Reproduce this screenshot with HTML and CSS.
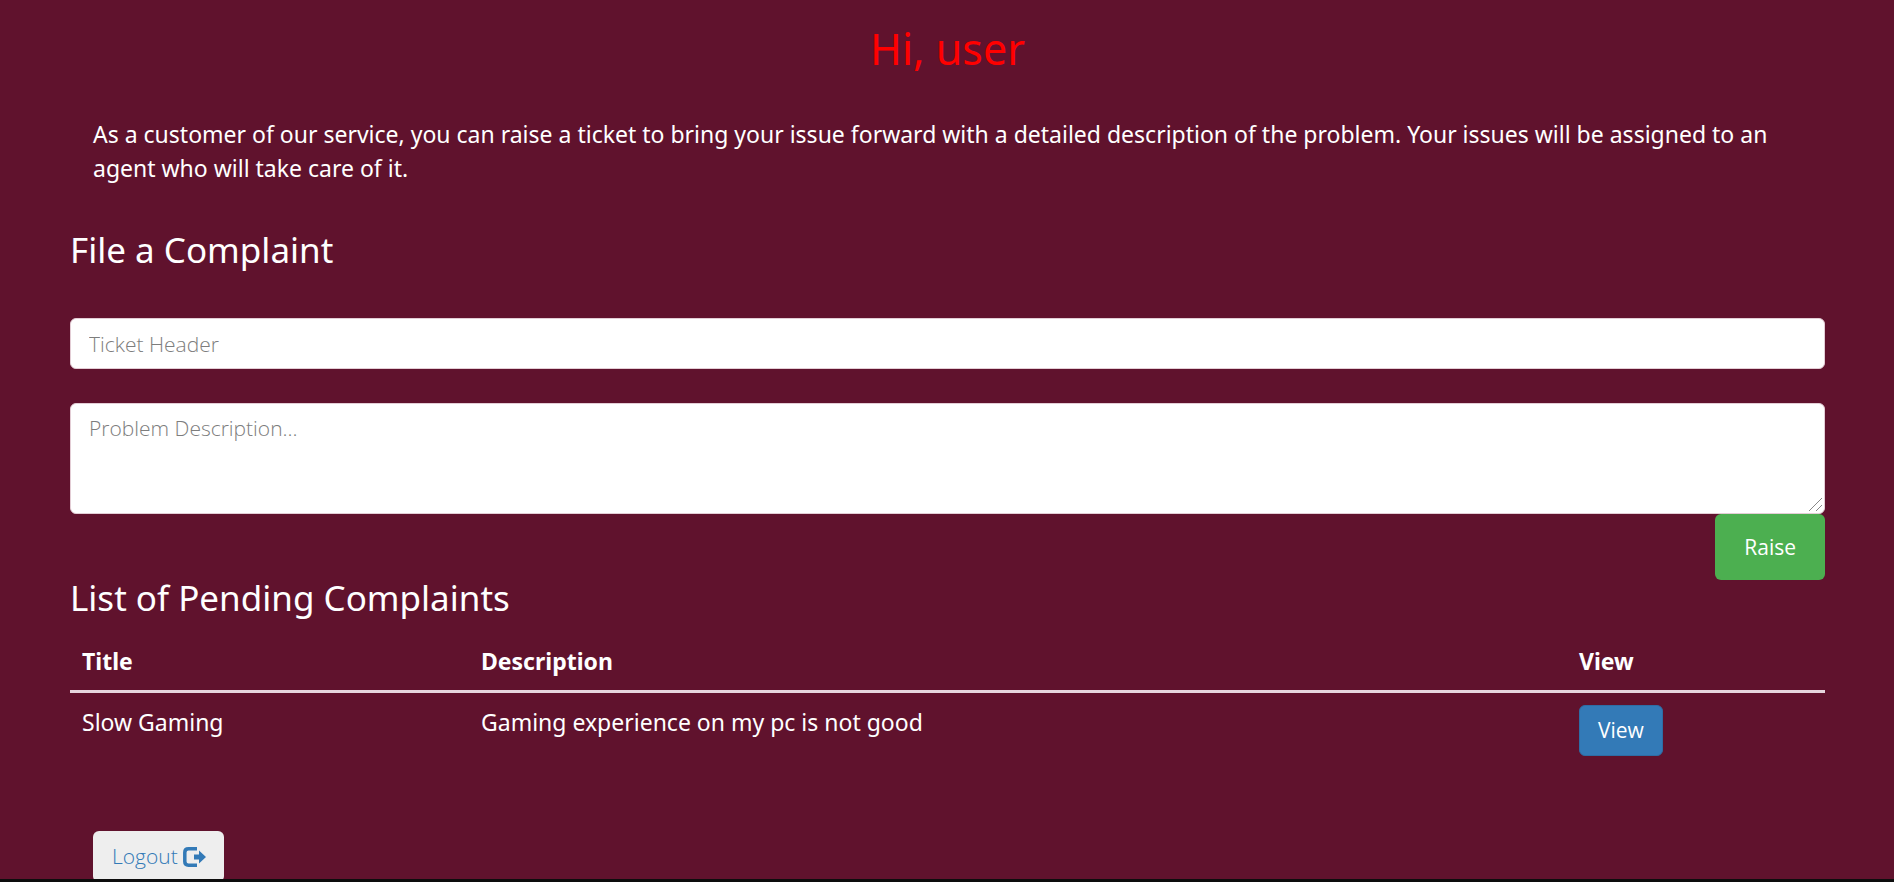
FILE: index.html
```html
<!DOCTYPE html>
<html lang="en">
<head>
<meta charset="utf-8">
<meta name="viewport" content="width=device-width, initial-scale=1">
<title>Customer complaints</title>
<link rel="stylesheet" href="styles.css">
</head>
<body>
<main class="page">
  <h1 class="greeting">Hi, user</h1>
  <p class="intro">As a customer of our service, you can raise a ticket to bring your issue forward with a detailed description of the problem. Your issues will be assigned to an agent who will take care of it.</p>

  <h2 class="section-title">File a Complaint</h2>
  <form class="complaint-form">
    <input class="field" type="text" name="header" aria-label="Ticket Header" placeholder="Ticket Header">
    <textarea class="field field-area" name="description" aria-label="Problem Description" placeholder="Problem Description..."></textarea>
    <button class="btn btn-raise" type="submit">Raise</button>
  </form>

  <h2 class="section-title list-title">List of Pending Complaints</h2>
  <table class="complaints">
    <thead>
      <tr><th class="col-title">Title</th><th class="col-description">Description</th><th>View</th></tr>
    </thead>
    <tbody>
      <tr><td>Slow Gaming</td><td>Gaming experience on my pc is not good</td><td><button class="btn btn-view" type="button">View</button></td></tr>
    </tbody>
  </table>

  <a class="btn btn-logout" href="#">Logout
    <svg class="logout-icon" viewBox="0 0 23 20" aria-hidden="true">
      <path d="M14 1.8H5.500Q1.800 1.800 1.800 5.500V14.500Q1.800 18.200 5.500 18.200H14" fill="none" stroke="currentColor" stroke-width="3.500"/>
      <path d="M11 7.500H16V3.500L23 10L16 16.500V12.500H11Z" fill="currentColor"/>
    </svg>
  </a>
</main>
</body>
</html>
```
FILE: styles.css
```css
* {
  box-sizing: border-box;
}

body {
  display: flex;
  flex-direction: column;
  height: 100vh;
  margin: 0;
  border-bottom: 3px solid #0d0d0d;
  background: #60122d;
  color: #fff;
  font-family: "Noto Sans", "Open Sans", sans-serif;
  font-size: 23px;
  line-height: 34px;
}

.page {
  flex: 1;
  min-height: 0;
  overflow: hidden;
  padding: 24px 69px 0 70px;
}

.greeting {
  margin: 0;
  color: #f00;
  font-size: 43px;
  font-weight: 400;
  line-height: 50px;
  text-align: center;
}

.intro {
  margin: 43px 0 47px;
  padding: 0 23px;
}

.section-title {
  margin: 0;
  font-size: 35px;
  font-weight: 400;
  line-height: 36px;
}

.complaint-form {
  display: flex;
  flex-direction: column;
  margin-top: 50px;
}

.field {
  width: 100%;
  height: 51px;
  margin: 0 0 34px;
  padding: 8px 18px;
  border: 1px solid #e3cdd5;
  border-radius: 6px;
  background: #fff;
  color: #555;
  font-family: "Open Sans", sans-serif;
  font-size: 21px;
  font-weight: 300;
  line-height: 33px;
}

.field::placeholder {
  color: #7d7d7d;
  opacity: 1;
}

.field-area {
  height: 111px;
  margin: 0;
  resize: vertical;
}

.field-area::-webkit-resizer {
  background: linear-gradient(135deg, transparent 49%, #888 49%, #888 53%, transparent 53%, transparent 74%, #888 74%, #888 78%, transparent 78%) 0 0 / 13px 13px no-repeat;
}

.btn {
  border: 1px solid transparent;
  border-radius: 6px;
  font-family: "Open Sans", sans-serif;
  font-size: 21px;
  font-weight: 300;
  line-height: 33px;
  text-decoration: none;
  cursor: pointer;
}

.btn-raise {
  align-self: flex-end;
  padding: 16px 28px;
  background: #4caf50;
  color: #fff;
  font-weight: 400;
  line-height: 32px;
}

.list-title {
  margin-bottom: 16px;
}

.complaints {
  width: 100%;
  border-collapse: collapse;
}

.complaints th,
.complaints td {
  padding: 12px;
  text-align: left;
  vertical-align: top;
}

.complaints th {
  border-bottom: 3px solid #e6d5dd;
}

.col-title {
  width: 399px;
}

.col-description {
  width: 1098px;
}

.btn-view {
  display: block;
  padding: 8px 18px;
  border-color: #2e6da4;
  background: #337ab7;
  color: #fff;
  font-weight: 400;
}

.btn-logout {
  display: inline-flex;
  align-items: center;
  gap: 5px;
  margin: 63px 0 0 23px;
  padding: 8px 17px 8px 18px;
  background: #eee;
  color: #337ab7;
}

.logout-icon {
  width: 23px;
  height: 20px;
}
```
